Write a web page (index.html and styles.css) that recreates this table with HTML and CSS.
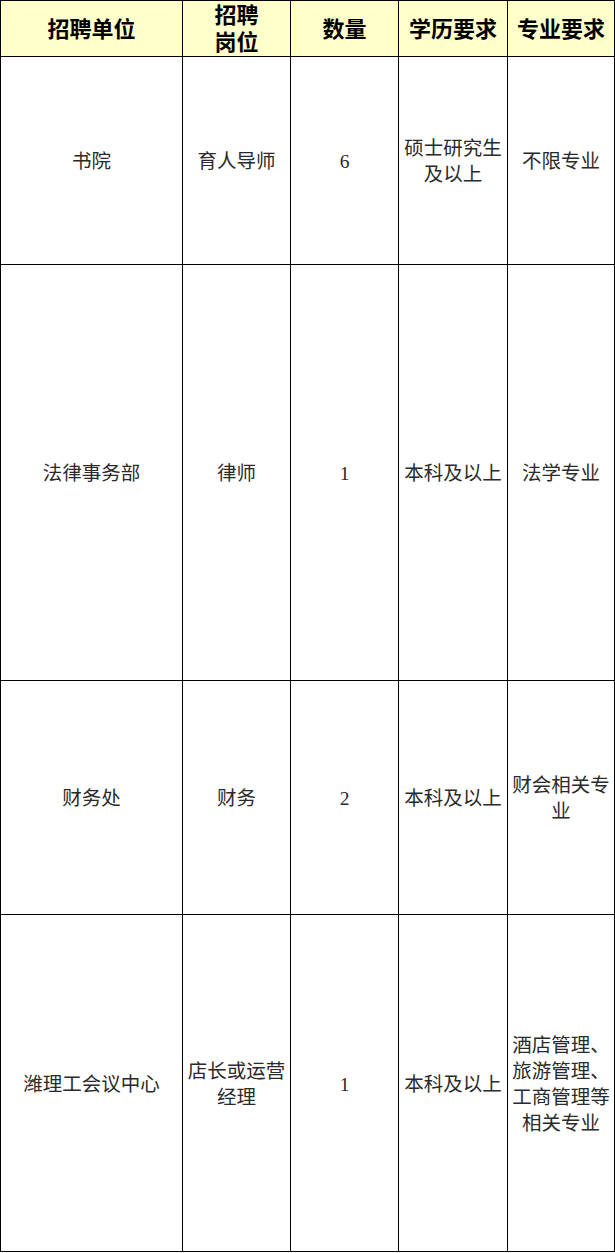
FILE: index.html
```html
<!DOCTYPE html>
<html lang="zh">
<head>
<meta charset="utf-8">
<link rel="stylesheet" href="styles.css">
</head>
<body>
<table class="jobs">
  <colgroup>
    <col class="c1"><col class="c2"><col class="c3"><col class="c4"><col class="c5">
  </colgroup>
  <thead>
    <tr class="head">
      <th>招聘单位</th>
      <th>招聘<br>岗位</th>
      <th>数量</th>
      <th>学历要求</th>
      <th>专业要求</th>
    </tr>
  </thead>
  <tbody>
    <tr class="r1">
      <td>书院</td>
      <td>育人导师</td>
      <td>6</td>
      <td>硕士研究生及以上</td>
      <td>不限专业</td>
    </tr>
    <tr class="r2">
      <td>法律事务部</td>
      <td>律师</td>
      <td>1</td>
      <td>本科及以上</td>
      <td>法学专业</td>
    </tr>
    <tr class="r3">
      <td>财务处</td>
      <td>财务</td>
      <td>2</td>
      <td>本科及以上</td>
      <td>财会相关专业</td>
    </tr>
    <tr class="r4">
      <td>潍理工会议中心</td>
      <td>店长或运营经理</td>
      <td>1</td>
      <td>本科及以上</td>
      <td>酒店管理、旅游管理、工商管理等相关专业</td>
    </tr>
  </tbody>
</table>
</body>
</html>
```
FILE: styles.css
```css
html, body {
  margin: 0;
  padding: 0;
  background: #ffffff;
}
.jobs {
  border-collapse: collapse;
  table-layout: fixed;
  width: 614px;
  font-family: "Liberation Serif", "Noto Sans CJK SC", serif;
}
.c1 { width: 182px; }
.c2 { width: 108px; }
.c3 { width: 108px; }
.c4 { width: 109px; }
.c5 { width: 107px; }
.jobs th, .jobs td {
  border: 1px solid #000;
  text-align: center;
  vertical-align: middle;
  padding: 0 1px;
}
.jobs th {
  background: #ffffcc;
  color: #000;
  font-weight: bold;
  font-size: 22px;
  line-height: 27px;
  padding-top: 1px;
}
.jobs td {
  color: #2a2a2a;
  font-size: 19.5px;
  line-height: 26px;
  padding-top: 3px;
}
.head { height: 56px; }
.r1 { height: 208px; }
.r2 { height: 416px; }
.r3 { height: 234px; }
.r4 { height: 337px; }
```
